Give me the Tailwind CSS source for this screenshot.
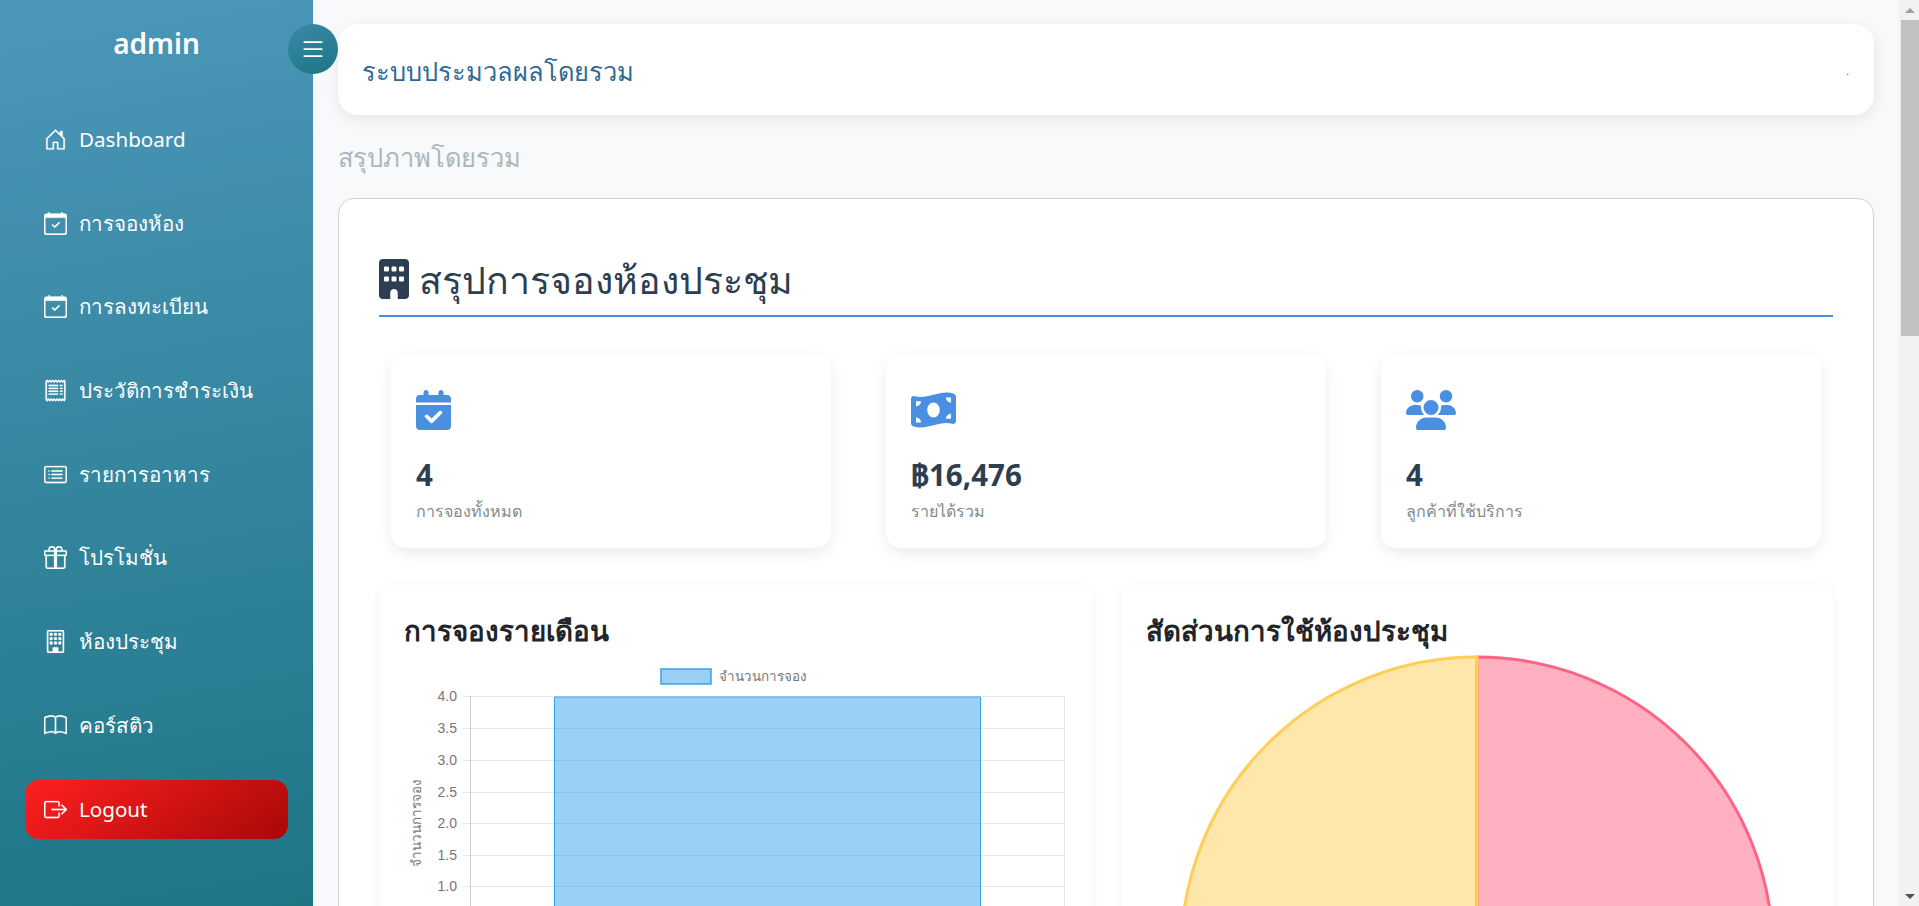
<!DOCTYPE html>
<html lang="th"><head><meta charset="utf-8"><title>admin</title>
<script src="https://cdn.jsdelivr.net/npm/@tailwindcss/browser@4"></script></head>
<body class="h-[906px] overflow-hidden bg-[#f8f9fa] font-['Noto_Sans','Open_Sans',sans-serif]">
<div class="relative flex h-[906px]">
  <aside class="flex h-full w-[313px] shrink-0 flex-col bg-[linear-gradient(170deg,#4c97ba,#1e7685)] px-[25px] text-white">
    <h1 class="mt-[23px] h-[40px] text-center text-[28px] leading-[40px] font-semibold">admin</h1>
    <nav class="mt-[47px] flex flex-col gap-[24.7px] text-[20.6px]">
      <a class="flex h-[59px] items-center gap-[12px] px-[19px]"><svg class="size-[23px] shrink-0" viewBox="0 0 16 16" fill="currentColor" stroke="currentColor" stroke-width=".15"><path d="M8.354 1.146a.5.5 0 0 0-.708 0l-6 6A.5.5 0 0 0 1.5 7.5v7a.5.5 0 0 0 .5.5h4.5a.5.5 0 0 0 .5-.5v-4h2v4a.5.5 0 0 0 .5.5H14a.5.5 0 0 0 .5-.5v-7a.5.5 0 0 0-.146-.354L13 5.793V2.5a.5.5 0 0 0-.5-.5h-1a.5.5 0 0 0-.5.5v1.293zM2.5 14V7.707l5.5-5.5 5.5 5.5V14H10v-4a.5.5 0 0 0-.5-.5h-3a.5.5 0 0 0-.5.5v4z"/></svg><span>Dashboard</span></a>
      <a class="flex h-[59px] items-center gap-[12px] px-[19px]"><svg class="size-[23px] shrink-0" viewBox="0 0 16 16" fill="currentColor" stroke="currentColor" stroke-width=".15"><path d="M10.854 7.146a.5.5 0 0 1 0 .708l-3 3a.5.5 0 0 1-.708 0l-1.5-1.5a.5.5 0 1 1 .708-.708L7.5 9.793l2.646-2.647a.5.5 0 0 1 .708 0"/><path d="M3.5 0a.5.5 0 0 1 .5.5V1h8V.5a.5.5 0 0 1 1 0V1h1a2 2 0 0 1 2 2v11a2 2 0 0 1-2 2H2a2 2 0 0 1-2-2V3a2 2 0 0 1 2-2h1V.5a.5.5 0 0 1 .5-.5M1 4v10a1 1 0 0 0 1 1h12a1 1 0 0 0 1-1V4z"/></svg><span>การจองห้อง</span></a>
      <a class="flex h-[59px] items-center gap-[12px] px-[19px]"><svg class="size-[23px] shrink-0" viewBox="0 0 16 16" fill="currentColor" stroke="currentColor" stroke-width=".15"><path d="M10.854 7.146a.5.5 0 0 1 0 .708l-3 3a.5.5 0 0 1-.708 0l-1.5-1.5a.5.5 0 1 1 .708-.708L7.5 9.793l2.646-2.647a.5.5 0 0 1 .708 0"/><path d="M3.5 0a.5.5 0 0 1 .5.5V1h8V.5a.5.5 0 0 1 1 0V1h1a2 2 0 0 1 2 2v11a2 2 0 0 1-2 2H2a2 2 0 0 1-2-2V3a2 2 0 0 1 2-2h1V.5a.5.5 0 0 1 .5-.5M1 4v10a1 1 0 0 0 1 1h12a1 1 0 0 0 1-1V4z"/></svg><span>การลงทะเบียน</span></a>
      <a class="flex h-[59px] items-center gap-[12px] px-[19px]"><svg class="size-[23px] shrink-0" viewBox="0 0 16 16" fill="currentColor" stroke="currentColor" stroke-width=".15"><path d="M1.92.506a.5.5 0 0 1 .434.14L3 1.293l.646-.647a.5.5 0 0 1 .708 0L5 1.293l.646-.647a.5.5 0 0 1 .708 0L7 1.293l.646-.647a.5.5 0 0 1 .708 0L9 1.293l.646-.647a.5.5 0 0 1 .708 0l.646.647.646-.647a.5.5 0 0 1 .708 0l.646.647.646-.647a.5.5 0 0 1 .801.13l.5 1A.5.5 0 0 1 15 2v12a.5.5 0 0 1-.053.224l-.5 1a.5.5 0 0 1-.8.13L13 14.707l-.646.647a.5.5 0 0 1-.708 0L11 14.707l-.646.647a.5.5 0 0 1-.708 0L9 14.707l-.646.647a.5.5 0 0 1-.708 0L7 14.707l-.646.647a.5.5 0 0 1-.708 0L5 14.707l-.646.647a.5.5 0 0 1-.708 0L3 14.707l-.646.647a.5.5 0 0 1-.801-.13l-.5-1A.5.5 0 0 1 1 14V2a.5.5 0 0 1 .053-.224l.5-1a.5.5 0 0 1 .367-.27m.217 1.338L2 2.118v11.764l.137.274.51-.51a.5.5 0 0 1 .707 0l.646.647.646-.646a.5.5 0 0 1 .708 0l.646.646.646-.646a.5.5 0 0 1 .708 0l.646.646.646-.646a.5.5 0 0 1 .708 0l.646.646.646-.646a.5.5 0 0 1 .708 0l.646.646.646-.646a.5.5 0 0 1 .708 0l.509.509.137-.274V2.118l-.137-.274-.51.51a.5.5 0 0 1-.707 0L12 1.707l-.646.647a.5.5 0 0 1-.708 0L10 1.707l-.646.647a.5.5 0 0 1-.708 0L8 1.707l-.646.647a.5.5 0 0 1-.708 0L6 1.707l-.646.647a.5.5 0 0 1-.708 0L4 1.707l-.646.647a.5.5 0 0 1-.708 0z"/><path d="M3 4.5a.5.5 0 0 1 .5-.5h6a.5.5 0 1 1 0 1h-6a.5.5 0 0 1-.5-.5m0 2a.5.5 0 0 1 .5-.5h6a.5.5 0 1 1 0 1h-6a.5.5 0 0 1-.5-.5m0 2a.5.5 0 0 1 .5-.5h6a.5.5 0 1 1 0 1h-6a.5.5 0 0 1-.5-.5m0 2a.5.5 0 0 1 .5-.5h6a.5.5 0 0 1 0 1h-6a.5.5 0 0 1-.5-.5M11.5 4a.5.5 0 0 0 0 1h1a.5.5 0 0 0 0-1zm0 2a.5.5 0 0 0 0 1h1a.5.5 0 0 0 0-1zm0 2a.5.5 0 0 0 0 1h1a.5.5 0 0 0 0-1zm0 2a.5.5 0 0 0 0 1h1a.5.5 0 0 0 0-1z"/></svg><span>ประวัติการชำระเงิน</span></a>
      <a class="flex h-[59px] items-center gap-[12px] px-[19px]"><svg class="size-[23px] shrink-0" viewBox="0 0 16 16" fill="currentColor" stroke="currentColor" stroke-width=".15"><path d="M14.5 3a.5.5 0 0 1 .5.5v9a.5.5 0 0 1-.5.5h-13a.5.5 0 0 1-.5-.5v-9a.5.5 0 0 1 .5-.5zm-13-1A1.5 1.5 0 0 0 0 3.5v9A1.5 1.5 0 0 0 1.5 14h13a1.5 1.5 0 0 0 1.5-1.5v-9A1.5 1.5 0 0 0 14.5 2z"/><path d="M5 8a.5.5 0 0 1 .5-.5h7a.5.5 0 0 1 0 1h-7A.5.5 0 0 1 5 8m0-2.5a.5.5 0 0 1 .5-.5h7a.5.5 0 0 1 0 1h-7a.5.5 0 0 1-.5-.5m0 5a.5.5 0 0 1 .5-.5h7a.5.5 0 0 1 0 1h-7a.5.5 0 0 1-.5-.5m-1-5a.5.5 0 1 1-1 0 .5.5 0 0 1 1 0M4 8a.5.5 0 1 1-1 0 .5.5 0 0 1 1 0m0 2.5a.5.5 0 1 1-1 0 .5.5 0 0 1 1 0"/></svg><span>รายการอาหาร</span></a>
      <a class="flex h-[59px] items-center gap-[12px] px-[19px]"><svg class="size-[23px] shrink-0" viewBox="0 0 16 16" fill="currentColor" stroke="currentColor" stroke-width=".15"><path d="M3 2.5a2.5 2.5 0 0 1 5 0 2.5 2.5 0 0 1 5 0v.006c0 .07 0 .27-.038.494H15a1 1 0 0 1 1 1v2a1 1 0 0 1-1 1v7.5a1.5 1.5 0 0 1-1.5 1.5h-11A1.5 1.5 0 0 1 1 14.5V7a1 1 0 0 1-1-1V4a1 1 0 0 1 1-1h2.038A3 3 0 0 1 3 2.506zm1.068.5H7v-.5a1.5 1.5 0 1 0-3 0c0 .085.002.274.045.43zM9 3h2.932l.023-.07c.043-.156.045-.345.045-.43a1.5 1.5 0 0 0-3 0zM1 4v2h6V4zm8 0v2h6V4zm5 3H9v8h4.5a.5.5 0 0 0 .5-.5zm-7 8V7H2v7.5a.5.5 0 0 0 .5.5z"/></svg><span>โปรโมชั่น</span></a>
      <a class="flex h-[59px] items-center gap-[12px] px-[19px]"><svg class="size-[23px] shrink-0" viewBox="0 0 16 16" fill="currentColor" stroke="currentColor" stroke-width=".15"><path d="M4 2.5a.5.5 0 0 1 .5-.5h1a.5.5 0 0 1 .5.5v1a.5.5 0 0 1-.5.5h-1a.5.5 0 0 1-.5-.5zm3 0a.5.5 0 0 1 .5-.5h1a.5.5 0 0 1 .5.5v1a.5.5 0 0 1-.5.5h-1a.5.5 0 0 1-.5-.5zm3.5-.5a.5.5 0 0 0-.5.5v1a.5.5 0 0 0 .5.5h1a.5.5 0 0 0 .5-.5v-1a.5.5 0 0 0-.5-.5zM4 5.5a.5.5 0 0 1 .5-.5h1a.5.5 0 0 1 .5.5v1a.5.5 0 0 1-.5.5h-1a.5.5 0 0 1-.5-.5zM7.5 5a.5.5 0 0 0-.5.5v1a.5.5 0 0 0 .5.5h1a.5.5 0 0 0 .5-.5v-1a.5.5 0 0 0-.5-.5zm2.5.5a.5.5 0 0 1 .5-.5h1a.5.5 0 0 1 .5.5v1a.5.5 0 0 1-.5.5h-1a.5.5 0 0 1-.5-.5zM4.5 8a.5.5 0 0 0-.5.5v1a.5.5 0 0 0 .5.5h1a.5.5 0 0 0 .5-.5v-1a.5.5 0 0 0-.5-.5zm2.5.5a.5.5 0 0 1 .5-.5h1a.5.5 0 0 1 .5.5v1a.5.5 0 0 1-.5.5h-1a.5.5 0 0 1-.5-.5zm3.5-.5a.5.5 0 0 0-.5.5v1a.5.5 0 0 0 .5.5h1a.5.5 0 0 0 .5-.5v-1a.5.5 0 0 0-.5-.5z"/><path d="M2 1a1 1 0 0 1 1-1h10a1 1 0 0 1 1 1v14a1 1 0 0 1-1 1H3a1 1 0 0 1-1-1zm11 0H3v14h3v-2.5a.5.5 0 0 1 .5-.5h3a.5.5 0 0 1 .5.5V15h3z"/></svg><span>ห้องประชุม</span></a>
      <a class="flex h-[59px] items-center gap-[12px] px-[19px]"><svg class="size-[23px] shrink-0" viewBox="0 0 16 16" fill="currentColor" stroke="currentColor" stroke-width=".15"><path d="M1 2.828c.885-.37 2.154-.769 3.388-.893 1.33-.134 2.458.063 3.112.752v9.746c-.935-.53-2.12-.603-3.213-.493-1.18.12-2.37.461-3.287.811zm7.5-.141c.654-.689 1.782-.886 3.112-.752 1.234.124 2.503.523 3.388.893v9.923c-.918-.35-2.107-.692-3.287-.81-1.094-.111-2.278-.039-3.213.492zM8 1.783C7.015.936 5.587.81 4.287.94c-1.514.153-3.042.672-3.994 1.105A.5.5 0 0 0 0 2.5v11a.5.5 0 0 0 .707.455c.882-.4 2.303-.881 3.68-1.02 1.409-.142 2.59.087 3.223.877a.5.5 0 0 0 .78 0c.633-.79 1.814-1.019 3.222-.877 1.378.139 2.8.62 3.681 1.02A.5.5 0 0 0 16 13.5v-11a.5.5 0 0 0-.293-.455c-.952-.433-2.48-.952-3.994-1.105C10.413.809 8.985.936 8 1.783"/></svg><span>คอร์สติว</span></a>
      <a class="flex h-[59px] items-center gap-[12px] rounded-[14px] bg-[linear-gradient(145deg,#ff2020,#a80808)] px-[19px]"><svg class="size-[23px] shrink-0" viewBox="0 0 16 16" fill="currentColor" stroke="currentColor" stroke-width=".15"><path d="M10 12.5a.5.5 0 0 1-.5.5h-8a.5.5 0 0 1-.5-.5v-9a.5.5 0 0 1 .5-.5h8a.5.5 0 0 1 .5.5v2a.5.5 0 0 0 1 0v-2A1.5 1.5 0 0 0 9.5 2h-8A1.5 1.5 0 0 0 0 3.5v9A1.5 1.5 0 0 0 1.5 14h8a1.5 1.5 0 0 0 1.5-1.5v-2a.5.5 0 0 0-1 0z"/><path d="M15.854 8.354a.5.5 0 0 0 0-.708l-3-3a.5.5 0 0 0-.708.708L14.293 7.5H5.5a.5.5 0 0 0 0 1h8.793l-2.147 2.146a.5.5 0 0 0 .708.708z"/></svg><span>Logout</span></a>
    </nav>
  </aside>
  <button class="absolute top-[24px] left-[288px] z-10 flex size-[50px] items-center justify-center rounded-full bg-[linear-gradient(160deg,#3a8aa6,#1d7585)] text-white"><svg class="size-[28px]" viewBox="0 0 16 16" fill="currentColor"><path d="M2.5 12a.5.5 0 0 1 .5-.5h10a.5.5 0 0 1 0 1H3a.5.5 0 0 1-.5-.5m0-4a.5.5 0 0 1 .5-.5h10a.5.5 0 0 1 0 1H3a.5.5 0 0 1-.5-.5m0-4a.5.5 0 0 1 .5-.5h10a.5.5 0 0 1 0 1H3a.5.5 0 0 1-.5-.5"/></svg></button>

  <main class="h-full min-w-0 flex-1 overflow-hidden px-[25px] pt-[24px]">
    <header class="flex h-[91px] items-center justify-between rounded-[20px] bg-white pr-[25px] pl-[24px] shadow-[0_4px_15px_rgba(0,0,0,0.08)]">
      <h2 class="pt-[4px] text-[25.4px] text-[#2c6a94]">ระบบประมวลผลโดยรวม</h2>
      <span class="pt-[4px] text-[10px] text-[#2c6a94]">.</span>
    </header>
    <h3 class="mt-[24px] text-[25.4px] leading-[36px] text-[#a9b7ba]">สรุปภาพโดยรวม</h3>
    <section class="mt-[23px] rounded-[16px] border border-[#cfd2d4] bg-white px-[40px] pt-[60px]">
      <div class="flex h-[58px] items-start gap-[10px] border-b-2 border-[#4a90e2] text-[#2c3e50]">
        <svg class="h-[40px] w-[30px] shrink-0" viewBox="0 0 384 512" fill="currentColor"><path d="M48 0C21.5 0 0 21.5 0 48V464c0 26.5 21.5 48 48 48h96V432c0-26.5 21.5-48 48-48s48 21.5 48 48v80h96c26.5 0 48-21.5 48-48V48c0-26.5-21.5-48-48-48H48zM64 240c0-8.8 7.2-16 16-16h32c8.8 0 16 7.2 16 16v32c0 8.8-7.2 16-16 16H80c-8.8 0-16-7.2-16-16V240zm112-16h32c8.8 0 16 7.2 16 16v32c0 8.8-7.2 16-16 16H176c-8.8 0-16-7.2-16-16V240c0-8.8 7.2-16 16-16zm80 16c0-8.8 7.2-16 16-16h32c8.8 0 16 7.2 16 16v32c0 8.8-7.2 16-16 16H272c-8.8 0-16-7.2-16-16V240zM80 96h32c8.8 0 16 7.2 16 16v32c0 8.8-7.2 16-16 16H80c-8.8 0-16-7.2-16-16V112c0-8.8 7.2-16 16-16zm80 16c0-8.8 7.2-16 16-16h32c8.8 0 16 7.2 16 16v32c0 8.8-7.2 16-16 16H176c-8.8 0-16-7.2-16-16V112zM272 96h32c8.8 0 16 7.2 16 16v32c0 8.8-7.2 16-16 16H272c-8.8 0-16-7.2-16-16V112c0-8.8 7.2-16 16-16z"/></svg>
        <span class="text-[37.5px] leading-[42px]">สรุปการจองห้องประชุม</span>
      </div>
      <div class="mt-[37px] grid grid-cols-3 gap-x-[55px] px-[12px]">
        <div class="h-[194px] rounded-[15px] bg-white p-[25px] pt-[36px] shadow-[0_5px_15px_rgba(0,0,0,0.08)]">
          <svg class="h-[40px] w-[35px]" viewBox="0 0 448 512" fill="#4a90e2"><path d="M128 0c17.7 0 32 14.3 32 32V64H288V32c0-17.7 14.3-32 32-32s32 14.3 32 32V64h48c26.5 0 48 21.5 48 48v48H0V112C0 85.5 21.5 64 48 64H96V32c0-17.7 14.3-32 32-32zM0 192H448V464c0 26.5-21.5 48-48 48H48c-26.5 0-48-21.5-48-48V192zM329 305c9.4-9.4 9.4-24.6 0-33.9s-24.6-9.4-33.9 0l-95 95-47-47c-9.4-9.4-24.6-9.4-33.9 0s-9.4 24.6 0 33.9l64 64c9.4 9.4 24.6 9.4 33.9 0L329 305z"/></svg>
          <div class="mt-[25px] text-[29.5px] leading-[40px] font-bold text-[#2c3e50]">4</div>
          <div class="mt-[4px] text-[16.1px] leading-[24px] text-[#7f8c8d]">การจองทั้งหมด</div>
        </div>
        <div class="h-[194px] rounded-[15px] bg-white p-[25px] pt-[36px] shadow-[0_5px_15px_rgba(0,0,0,0.08)]">
          <svg class="h-[40px] w-[45px]" viewBox="0 0 576 512" fill="#4a90e2"><path d="M0 112.5V422.3c0 18 10.1 35 27 41.3c87 32.5 174 10.3 261-11.9c79.8-20.3 159.6-40.7 239.3-18.9c23 6.3 48.7-9.5 48.7-33.4V89.7c0-18-10.1-35-27-41.3C462 15.9 375 38.1 288 60.3C208.2 80.6 128.4 100.9 48.7 79.1C25.6 72.8 0 88.6 0 112.5zM288 352c-44.2 0-80-43-80-96s35.8-96 80-96s80 43 80 96s-35.8 96-80 96zM64 352c35.3 0 64 28.7 64 64H64V352zm64-208c0 35.3-28.7 64-64 64V144h64zM512 304v64H448c0-35.3 28.7-64 64-64zM448 96h64v64c-35.3 0-64-28.7-64-64z"/></svg>
          <div class="mt-[25px] text-[29.5px] leading-[40px] font-bold text-[#2c3e50]">฿16,476</div>
          <div class="mt-[4px] text-[16.1px] leading-[24px] text-[#7f8c8d]">รายได้รวม</div>
        </div>
        <div class="h-[194px] rounded-[15px] bg-white p-[25px] pt-[36px] shadow-[0_5px_15px_rgba(0,0,0,0.08)]">
          <svg class="h-[40px] w-[50px]" viewBox="0 0 640 512" fill="#4a90e2"><path d="M144 0a80 80 0 1 1 0 160A80 80 0 1 1 144 0zM512 0a80 80 0 1 1 0 160A80 80 0 1 1 512 0zM0 298.7C0 239.8 47.8 192 106.7 192h42.7c15.9 0 31 3.5 44.6 9.7c-1.3 7.2-1.9 14.7-1.9 22.3c0 38.2 16.8 72.5 43.3 96c-.2 0-.4 0-.7 0H21.3C9.6 320 0 310.4 0 298.7zM405.3 320c-.2 0-.4 0-.7 0c26.6-23.5 43.3-57.8 43.3-96c0-7.6-.7-15-1.9-22.3c13.6-6.3 28.7-9.7 44.6-9.7h42.7C592.2 192 640 239.8 640 298.7c0 11.8-9.6 21.3-21.3 21.3H405.3zM224 224a96 96 0 1 1 192 0 96 96 0 1 1 -192 0zM128 485.3C128 411.7 187.7 352 261.3 352H378.7C452.3 352 512 411.7 512 485.3c0 14.7-11.9 26.7-26.7 26.7H154.7c-14.7 0-26.7-11.9-26.7-26.7z"/></svg>
          <div class="mt-[25px] text-[29.5px] leading-[40px] font-bold text-[#2c3e50]">4</div>
          <div class="mt-[4px] text-[16.1px] leading-[24px] text-[#7f8c8d]">ลูกค้าที่ใช้บริการ</div>
        </div>
      </div>
      <div class="mt-[37px] grid grid-cols-2 gap-x-[29px]">
        <div class="h-[600px] rounded-[10px] bg-white shadow-[0_2px_10px_rgba(0,0,0,0.06)]">
          <h4 class="px-[25px] pt-[25px] text-[27.7px] leading-[40px] font-semibold text-[#212529]">การจองรายเดือน</h4>
          <svg class="block h-[256px] w-[712px]" viewBox="379 650 712 256" font-family="'Liberation Sans',sans-serif" fill="#777">
            <rect x="661" y="669" width="50" height="15" fill="rgba(54,162,235,.5)" stroke="#36a2eb" stroke-width="1.5"/>
            <text x="719" y="681" font-size="13.4" font-family="'Noto Sans',sans-serif">จำนวนการจอง</text>
            <g stroke="#e6e6e6" stroke-width="1">
              <path d="M470.5 696.5H1064.5M470.5 728.5H1064.5M470.5 760.5H1064.5M470.5 792.5H1064.5M470.5 823.5H1064.5M470.5 855.5H1064.5M470.5 886.5H1064.5"/>
              <path d="M463 696.5H470M463 728.5H470M463 760.5H470M463 792.5H470M463 823.5H470M463 855.5H470M463 886.5H470"/>
              <path d="M1064.5 696V906"/>
            </g>
            <path d="M470.5 696V906" stroke="#ccc"/>
            <path d="M554.5 907V697H980.5V907" fill="rgba(54,162,235,.5)" stroke="#36a2eb"/>
            <g font-size="14" text-anchor="end">
              <text x="457" y="701">4.0</text><text x="457" y="733">3.5</text><text x="457" y="765">3.0</text><text x="457" y="797">2.5</text><text x="457" y="828">2.0</text><text x="457" y="860">1.5</text><text x="457" y="891">1.0</text>
            </g>
            <text transform="translate(421 823) rotate(-90)" font-size="13.4" text-anchor="middle" font-family="'Noto Sans',sans-serif">จำนวนการจอง</text>
          </svg>
        </div>
        <div class="h-[600px] rounded-[10px] bg-white shadow-[0_2px_10px_rgba(0,0,0,0.06)]">
          <h4 class="px-[25px] pt-[25px] text-[27.7px] leading-[40px] font-semibold text-[#212529]">สัดส่วนการใช้ห้องประชุม</h4>
          <svg class="block h-[256px] w-[713px]" viewBox="1120 650 713 256">
            <path d="M1476 953V657A296 296 0 0 1 1772 953Z" fill="rgba(255,99,132,.5)" stroke="#ff6384" stroke-width="3"/>
            <path d="M1476 953A296 296 0 0 1 1180 953A296 296 0 0 1 1476 657Z" fill="rgba(255,206,86,.5)" stroke="#ffce56" stroke-width="3"/>
          </svg>
        </div>
      </div>
    </section>
  </main>
  <div class="flex h-full w-[20px] shrink-0 flex-col items-center bg-[#f1f1f1] pl-[2px]">
    <div class="flex h-[20px] w-full items-center justify-center"><div class="size-0 border-x-[5px] border-b-[5px] border-x-transparent border-b-[#a0a0a0]"></div></div>
    <div class="h-[316px] w-full bg-[#c1c1c1]"></div>
    <div class="flex-1"></div>
    <div class="flex h-[20px] w-full items-center justify-center"><div class="size-0 border-x-[5px] border-t-[5px] border-x-transparent border-t-[#505050]"></div></div>
  </div>
</div>
</body></html>
